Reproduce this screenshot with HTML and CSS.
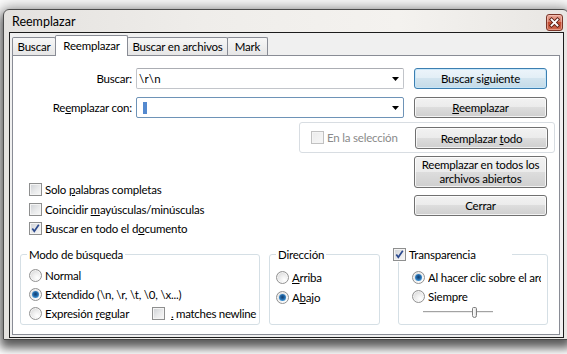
FILE: index.html
```html
<!DOCTYPE html>
<html lang="es">
<head>
<meta charset="utf-8">
<title>Reemplazar</title>
<link rel="stylesheet" href="styles.css">
</head>
<body>
<div class="window">
  <div class="titlebar">
    <span class="title">Reemplazar</span>
    <div class="close">
      <svg width="15" height="15" viewBox="0 0 15 15">
        <path d="M4.5 4.5 L10.5 10.5 M10.5 4.5 L4.5 10.5" stroke="#5a1d12" stroke-width="3.6" stroke-linecap="square"/>
        <path d="M4.5 4.5 L10.5 10.5 M10.5 4.5 L4.5 10.5" stroke="#ffffff" stroke-width="1.8" stroke-linecap="square"/>
      </svg>
    </div>
  </div>
  <div class="client">
    <div class="tabs">
      <div class="tab t1">Buscar</div>
      <div class="tab t2 active">Reemplazar</div>
      <div class="tab t3">Buscar en archivos</div>
      <div class="tab t4">Mark</div>
    </div>
    <div class="panel">
      <div class="row">
        <div class="lbl">Buscar:</div>
        <div class="combo"><span class="val">\r\n</span><svg class="arrow" width="7" height="4" viewBox="0 0 7 4"><polygon points="0,0 7,0 3.5,4" fill="#000"/></svg></div>
        <div class="btn default"><span>Buscar siguiente</span></div>
      </div>
      <div class="row row2">
        <div class="lbl">Re<u>e</u>mplazar con:</div>
        <div class="combo focus"><span class="caret"></span><svg class="arrow" width="7" height="4" viewBox="0 0 7 4"><polygon points="0,0 7,0 3.5,4" fill="#000"/></svg></div>
        <div class="btn"><span><u>R</u>eemplazar</span></div>
      </div>
      <div class="selgroup">
        <span class="chk disabled"></span><span class="dtext">En la selección</span>
        <div class="btn selbtn"><span>Reemplazar <u>t</u>odo</span></div>
      </div>
      <div class="lower">
        <div class="options">
          <div class="opt"><span class="chk"></span><span>Solo <u>p</u>alabras completas</span></div>
          <div class="opt"><span class="chk"></span><span>Coincidir <u>m</u>ayúsculas/minúsculas</span></div>
          <div class="opt"><span class="chk on"><svg width="11" height="11" viewBox="0 0 11 11"><path d="M2.3 5.4 L4.3 8.2 L8.8 1.8" fill="none" stroke="#2c4a8e" stroke-width="1.7"/></svg></span><span>Buscar en todo el d<u>o</u>cumento</span></div>
        </div>
        <div class="btncol">
          <div class="btn tall"><span>Reemplazar en todos los<br>archivos abiertos</span></div>
          <div class="btn close-btn"><span>Cerrar</span></div>
        </div>
      </div>
      <div class="groups">
        <div class="grp mode">
          <div class="legend">Modo de búsqueda</div>
          <div class="rows">
            <div class="opt r"><span class="radio"></span><span>Normal</span></div>
            <div class="opt r"><span class="radio on"></span><span>Extendido (\n, \r, \t, \0, \x...)</span></div>
            <div class="opt r">
              <span class="regex"><span class="radio"></span><span>Expresión <u>r</u>egular</span></span>
              <span class="chk"></span><span class="nl"><u>.</u> matches newline</span>
            </div>
          </div>
        </div>
        <div class="grp dir">
          <div class="legend">Dirección</div>
          <div class="rows">
            <div class="opt r20"><span class="radio"></span><span><u>A</u>rriba</span></div>
            <div class="opt r20"><span class="radio on"></span><span>A<u>b</u>ajo</span></div>
          </div>
        </div>
        <div class="grp trans">
          <div class="legend chklegend"><span class="chk on"><svg width="11" height="11" viewBox="0 0 11 11"><path d="M2.3 5.4 L4.3 8.2 L8.8 1.8" fill="none" stroke="#2c4a8e" stroke-width="1.7"/></svg></span><span>Transparencia</span></div>
          <div class="rows">
            <div class="opt tr1"><span class="radio on"></span><span class="clip">Al hacer clic sobre el archivo</span></div>
            <div class="opt tr2"><span class="radio"></span><span>Siempre</span></div>
            <div class="slider"><span class="thumb"></span></div>
          </div>
        </div>
      </div>
    </div>
  </div>
</div>
</body>
</html>
```

FILE: styles.css
```css
* { box-sizing: border-box; }
html, body { margin: 0; padding: 0; }
body {
  width: 567px;
  height: 354px;
  overflow: hidden;
  background: #ffffff;
  font-family: Lato, "Noto Sans", sans-serif;
  font-size: 11.5px;
  letter-spacing: -0.2px;
  color: #000;
}
u { text-decoration: underline; text-underline-offset: 1px; }

.window {
  margin: 9px 0 0 3px;
  width: 566px;
  height: 331px;
  border: 1px solid #4a4a4a;
  border-radius: 6px 6px 0 0;
  background: linear-gradient(90deg, #e4e2df 0%, #efedea 35%, #f4f2ef 70%, #e8e6e3 100%);
  box-shadow: 0 0 14px 4px rgba(0,0,0,0.28), 0 6px 10px 2px rgba(0,0,0,0.55);
  padding: 0 4px 1px 5px;
  display: flex;
  flex-direction: column;
}
.titlebar {
  height: 22px;
  display: flex;
  align-items: center;
  padding-left: 3px;
}
.title { font-size: 12.5px; letter-spacing: 0; padding-top: 1px; }
.close {
  margin-left: auto;
  align-self: flex-end;
  margin-bottom: 1px;
  margin-right: 1px;
  width: 17px;
  height: 17px;
  border: 1px solid #7a3427;
  border-radius: 3px;
  background: linear-gradient(#e9a797 0%, #d9806b 45%, #c24a30 50%, #d06a4f 100%);
  box-shadow: inset 0 0 0 1px rgba(255,220,210,0.45);
  display: flex;
  align-items: center;
  justify-content: center;
}

.client {
  height: 306px;
  border: 1px solid #1c1c1c;
  background: #f0f0f0;
  padding: 2px 0 0 2px;
}

.tabs {
  display: flex;
  align-items: flex-end;
  height: 20px;
}
.tab {
  height: 18px;
  border: 1px solid #898c95;
  border-bottom: none;
  border-radius: 2px 2px 0 0;
  background: linear-gradient(#f7f7f7, #e6e6e6);
  text-align: center;
  line-height: 18px;
  margin-left: -1px;
}
.tab.t1 { margin-left: 0; width: 44px; }
.tab.t2 { width: 73px; }
.tab.t3 { width: 101px; }
.tab.t4 { width: 41px; }
.tab.active {
  height: 21px;
  margin-bottom: -1px;
  background: #fff;
  position: relative;
  z-index: 1;
  line-height: 19px;
}

.panel {
  width: 548px;
  height: 280px;
  border: 1px solid #898c95;
  background: #fff;
  padding-top: 12px;
}

.row {
  display: flex;
  align-items: center;
  height: 21px;
}
.row2 { margin-top: 8px; }
.lbl {
  width: 123px;
  text-align: right;
  padding-right: 4px;
}
.combo {
  width: 268px;
  height: 21px;
  border: 1px solid #c2c5ca;
  border-top-color: #abadb3;
  border-radius: 2px;
  display: flex;
  align-items: center;
  padding-left: 2px;
}
.combo.focus { border-color: #6e93b7; }
.val { letter-spacing: 0.2px; }
.caret {
  display: block;
  margin-left: 4px;
  width: 4px;
  height: 12px;
  background: #5489cf;
}
.arrow { margin-left: auto; margin-right: 4px; }

.btn {
  width: 133px;
  height: 21px;
  border: 1px solid #707070;
  border-radius: 3px;
  background: linear-gradient(#f2f2f2 0%, #ebebeb 50%, #dddddd 50%, #cfcfcf 100%);
  box-shadow: inset 0 0 0 1px rgba(255,255,255,0.75);
  display: flex;
  align-items: center;
  justify-content: center;
  text-align: center;
}
.row .btn { margin-left: 10px; }
.btn.default {
  border-color: #3c7fb1;
  background: linear-gradient(#ecf4fa 0%, #e2eef6 50%, #d2e4ef 50%, #c5dbe8 100%);
  box-shadow: inset 0 0 0 1px rgba(196,230,250,0.9);
}

.selgroup {
  margin: 4px 0 0 286px;
  width: 256px;
  height: 31px;
  border: 1px solid #d8dde2;
  border-radius: 3px;
  display: flex;
  align-items: center;
  padding: 0 6px 0 11px;
}
.dtext { color: #8a8a8a; margin-left: 3px; }
.selbtn { margin-left: auto; height: 22px; margin-top: 1px; }

.chk {
  display: inline-flex;
  align-items: center;
  justify-content: center;
  flex: none;
  width: 13px;
  height: 13px;
  border: 1px solid #8e8f8f;
  background: linear-gradient(135deg, #cdd0d4 0%, #e9eaeb 55%, #f8f8f8 100%);
  box-shadow: inset 0 0 0 1px #f4f4f4;
}
.chk.disabled {
  border-color: #c1c1c1;
  background: linear-gradient(135deg, #ebebeb, #f7f7f7);
}

.lower {
  display: flex;
  margin-top: 3px;
}
.options {
  flex: 1;
  padding: 24px 0 0 16px;
}
.opt {
  display: flex;
  align-items: center;
  height: 19.5px;
  white-space: nowrap;
}
.opt > .chk, .opt > .radio { margin-right: 3px; }
.btncol {
  width: 133px;
  margin-right: 12px;
}
.btn.tall { height: 32px; line-height: 14px; }
.btn.close-btn { margin-top: 7px; }

.groups {
  display: flex;
  margin-top: 15.5px;
  padding-left: 7px;
}
.grp {
  height: 71px;
  border: 1px solid #d5dfe5;
  border-radius: 3px;
  display: flex;
  flex-direction: column;
}
.grp.mode { width: 240px; }
.grp.dir { width: 111px; margin-left: 9px; }
.grp.trans { width: 150px; margin-left: 18px; }
.legend {
  align-self: flex-start;
  margin: -8px 0 0 6px;
  padding: 0 2px;
  height: 15px;
  line-height: 15px;
  background: #fff;
  white-space: nowrap;
}
.chklegend {
  margin-left: -6px;
  padding: 0;
  width: 119px;
  display: flex;
  align-items: center;
}
.chklegend .chk { margin-right: 3px; }

.mode .rows { padding: 4px 0 0 8px; }
.mode .r { height: 19px; }
.regex { display: flex; align-items: center; width: 123px; }
.regex .radio { margin-right: 3px; }
.nl { margin-left: 3px; letter-spacing: -0.3px; }

.dir .rows { padding: 5px 0 0 6px; }
.r20 { height: 20px; }

.trans .rows { padding: 5px 0 0 13px; }
.tr1 { height: 20px; width: 129px; overflow: hidden; }
.tr2 { height: 18px; }
.clip { overflow: hidden; }

.radio {
  display: inline-flex;
  align-items: center;
  justify-content: center;
  flex: none;
  width: 13px;
  height: 13px;
  border-radius: 50%;
  border: 1px solid #929292;
  background: radial-gradient(circle at 65% 70%, #ffffff 0%, #ececec 45%, #cdcdcd 100%);
  box-shadow: inset 0 0 0 1px rgba(255,255,255,0.6);
}
.radio.on::after {
  content: "";
  display: block;
  width: 7px;
  height: 7px;
  border-radius: 50%;
  background: radial-gradient(circle at 50% 45%, #123c6b 0%, #1f5f9c 35%, #3f93d4 70%, #95cff2 100%);
}

.slider {
  margin: 1px 0 0 11px;
  width: 70px;
  height: 12px;
  display: flex;
  align-items: center;
  background: linear-gradient(to bottom, transparent 5px, #a3a3a3 5px, #a3a3a3 6px, #ececec 6px, #ececec 7px, transparent 7px);
}
.thumb {
  display: block;
  margin-left: 49px;
  width: 5px;
  height: 11px;
  border: 1px solid #7d7d7d;
  border-radius: 2px 2px 3px 3px;
  background: linear-gradient(90deg, #ffffff, #e2e2e2);
}
```
